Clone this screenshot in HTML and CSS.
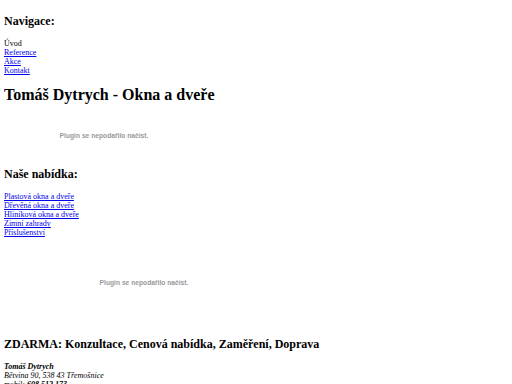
FILE: index.html
```html
<!DOCTYPE html>
<html lang="cs">
<head>
<meta charset="utf-8">
<title>Tomáš Dytrych - Okna a dveře</title>
<link rel="stylesheet" href="styles.css">
</head>
<body class="page">
<h2 class="title2">Navigace:</h2>
<div class="menu">
<span class="current">Úvod</span><br>
<a href="#">Reference</a><br>
<a href="#">Akce</a><br>
<a href="#">Kontakt</a>
</div>
<h1 class="title1">Tomáš Dytrych - Okna a dveře</h1>
<div class="line"><span class="plugin plugin-small"><span class="plugin-msg">Plugin se nepodařilo načíst.</span></span></div>
<h2 class="title2">Naše nabídka:</h2>
<div class="menu">
<a href="#">Plastová okna a dveře</a><br>
<a href="#">Dřevěná okna a dveře</a><br>
<a href="#">Hliníková okna a dveře</a><br>
<a href="#">Zimní zahrady</a><br>
<a href="#">Příslušenství</a>
</div>
<div class="line"><span class="plugin plugin-big"><span class="plugin-msg">Plugin se nepodařilo načíst.</span></span></div>
<h2 class="title2">ZDARMA: Konzultace, Cenová nabídka, Zaměření, Doprava</h2>
<p class="contact"><b>Tomáš Dytrych</b><br>Bětvina 90, 538 43 Třemošnice<br>mobil: <b>608 512 173</b></p>
</body>
</html>
```
FILE: styles.css
```css
html { background: #fff; }
.page {
  margin: 4px;
  font-family: "Liberation Serif", "Times New Roman", serif;
  font-size: 8px;
  color: #000;
}
.title2 {
  font-size: 12px;
  font-weight: bold;
  margin: 10px 0;
}
.title1 {
  font-size: 16px;
  font-weight: bold;
  margin: 10.7px 0;
}
.menu a { color: #0000ee; text-decoration: underline; }
.line { line-height: normal; }
.plugin {
  display: inline-flex;
  align-items: center;
  justify-content: center;
  vertical-align: baseline;
}
.plugin-small { width: 200px; height: 43px; }
.plugin-big { width: 280px; height: 90px; }
.plugin-msg {
  font-family: "Liberation Sans", Arial, sans-serif;
  font-size: 6.7px;
  font-weight: bold;
  color: #999999;
}
.contact {
  margin: 10px 0;
  font-style: italic;
}
```
